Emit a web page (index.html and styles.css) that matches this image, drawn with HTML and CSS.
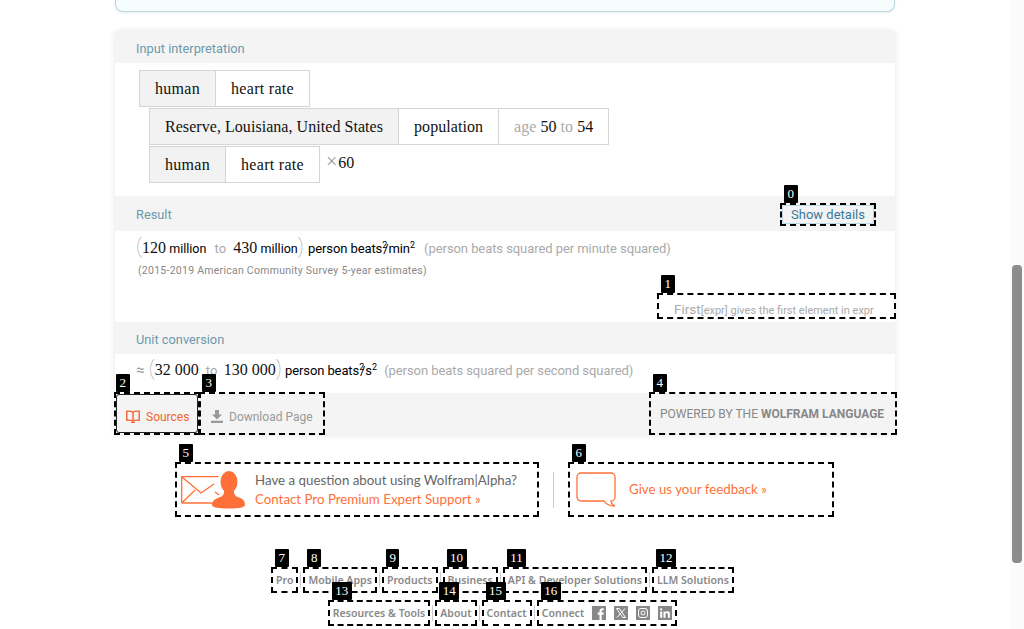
FILE: index.html
```html
<!DOCTYPE html>
<html lang="en">
<head>
    <meta charset="UTF-8">
    <title>human heart rate - Wolfram|Alpha</title>
    <link rel="stylesheet" href="styles.css">
</head>
<body>
<div class="page">
    <main class="main">
        <div class="query-end"></div>

        <section class="card">
            <h2 class="pod-title">Input interpretation</h2>
            <div class="pod-input">
                <div class="chips">
                    <span class="chip chip-head">human</span><span class="chip">heart rate</span>
                </div>
                <div class="chips chips-indent chips-tight">
                    <span class="chip chip-head">Reserve, Louisiana, United States</span><span class="chip">population</span><span class="chip"><i class="dim">age</i> 50 <i class="dim">to</i> 54</span>
                </div>
                <div class="chips chips-indent">
                    <span class="chip chip-head">human</span><span class="chip">heart rate</span>
                    <span class="factor"><i class="times">×</i>60</span>
                </div>
            </div>

            <div class="pod-title pod-title-row">
                <h2 class="pod-name">Result</h2>
                <a class="mark mark-details"><b class="tag">0</b><span class="details-btn">Show details</span></a>
            </div>
            <div class="pod-result">
                <p class="math">
                    <span class="paren">(</span><span class="num">120</span> <span class="mag">million</span>
                    <i class="word-to">to</i>
                    <span class="num">430</span> <span class="mag">million</span><span class="paren">)</span>
                    <span class="unit">person beats<sup>2</sup><span class="slash">/</span>min<sup>2</sup></span>
                    <span class="unit-name">(person beats squared per minute squared)</span>
                </p>
                <p class="source">(2015-2019 American Community Survey 5-year estimates)</p>
                <div class="hint-row">
                    <a class="mark mark-hint"><b class="tag">1</b><span class="hint"><span class="hint-big">First</span>[expr] gives the first element in expr</span></a>
                </div>
            </div>

            <h2 class="pod-title">Unit conversion</h2>
            <div class="pod-unit">
                <p class="math">
                    <i class="approx">≈</i>
                    <span class="paren">(</span><span class="num">32 000</span>
                    <i class="word-to">to</i>
                    <span class="num">130 000</span><span class="paren">)</span>
                    <span class="unit">person beats<sup>2</sup><span class="slash">/</span>s<sup>2</sup></span>
                    <span class="unit-name">(person beats squared per second squared)</span>
                </p>
            </div>

            <div class="card-foot">
                <a class="mark foot-btn foot-sources"><b class="tag">2</b>
                    <svg class="foot-icon" width="14" height="13" viewBox="0 0 14 13"><path d="M7 2.200C5.600 1.200 3.200 1 .8 1.200v9c2.400-.2 4.800 0 6.200 1 1.400-1 3.800-1.200 6.200-1v-9C10.800 1 8.400 1.200 7 2.200zM7 2.200v9" fill="none" stroke="#f0642d" stroke-width="1.400"/><path d="M5 12h4v1H5z" fill="#f0642d"/></svg>
                    Sources
                </a>
                <a class="mark foot-btn foot-download"><b class="tag">3</b>
                    <svg class="foot-icon" width="12" height="13" viewBox="0 0 12 13"><path d="M4 0h4v4.500h3L6 9.500 1 4.500h3zM0 10.800h12V13H0z" fill="#999"/></svg>
                    Download Page
                </a>
                <a class="mark foot-powered"><b class="tag">4</b>POWERED BY THE <strong>WOLFRAM LANGUAGE</strong></a>
            </div>
        </section>

        <div class="promo">
            <a class="mark promo-expert"><b class="tag">5</b>
                <svg class="promo-icon" width="65" height="38" viewBox="0 0 65 38">
                    <path d="M.7 32V5.700H37.500M.7 5.700 20 22l13-9M.7 32l13.500-13M.7 32H31M34 21l4 3" fill="none" stroke="#ff7038" stroke-width="1.300"/>
                    <ellipse cx="48" cy="11" rx="8.500" ry="11" fill="#ff7038"/>
                    <path d="M31 34c0-4 3-6 7-7.500 3-1 5-2 5-6.500h10c0 4.500 2 5.500 5 6.500 4 1.500 6 3.500 6 7.500 0 2.500-6 3.500-16 3.500S31 36.500 31 34z" fill="#ff7038"/>
                </svg>
                <span class="promo-text">
                    <span class="promo-q">Have a question about using Wolfram|Alpha?</span>
                    <span class="promo-link">Contact Pro Premium Expert Support »</span>
                </span>
            </a>
            <span class="promo-sep"></span>
            <a class="mark promo-feedback"><b class="tag">6</b>
                <svg class="promo-icon" width="41" height="35" viewBox="0 0 41 35"><path d="M5 1h30a4 4 0 0 1 4 4v20a4 4 0 0 1-4 4c0 2 2 4 4 5-5 0-9-2-11-5H5a4 4 0 0 1-4-4V5a4 4 0 0 1 4-4z" fill="none" stroke="#ff7038" stroke-width="1.300"/></svg>
                <span class="promo-link feedback-link">Give us your feedback »</span>
            </a>
        </div>

        <nav class="site-foot">
            <div class="foot-row">
                <a class="mark foot-link"><b class="tag">7</b>Pro</a><i class="foot-sep"></i>
                <a class="mark foot-link"><b class="tag">8</b>Mobile Apps</a><i class="foot-sep"></i>
                <a class="mark foot-link"><b class="tag">9</b>Products</a><i class="foot-sep"></i>
                <a class="mark foot-link"><b class="tag">10</b>Business</a><i class="foot-sep"></i>
                <a class="mark foot-link"><b class="tag">11</b>API &amp; Developer Solutions</a><i class="foot-sep"></i>
                <a class="mark foot-link"><b class="tag">12</b>LLM Solutions</a>
            </div>
            <div class="foot-row">
                <a class="mark foot-link"><b class="tag">13</b>Resources &amp; Tools</a><i class="foot-sep"></i>
                <a class="mark foot-link"><b class="tag">14</b>About</a><i class="foot-sep"></i>
                <a class="mark foot-link"><b class="tag">15</b>Contact</a><i class="foot-sep"></i>
                <a class="mark foot-link foot-connect"><b class="tag">16</b>Connect
                    <span class="social">
                        <svg width="14" height="14" viewBox="0 0 14 14"><path d="M0 0h14v14H9.700V8.700h1.800l.3-2.100H9.700V5.300c0-.6.2-1 1-1h1.100V2.400c-.2 0-.8-.1-1.600-.1-1.600 0-2.700 1-2.700 2.800v1.500H5.700v2.100h1.800V14H0z" fill="#888"/></svg>
                        <svg width="14" height="14" viewBox="0 0 14 14"><path d="M0 0h14v14H0z" fill="#888"/><path d="M2.500 2.500h2.800l6.200 9H8.700zM11 2.500 3 11.500" fill="none" stroke="#fff" stroke-width="1"/></svg>
                        <svg width="14" height="14" viewBox="0 0 14 14"><path d="M0 0h14v14H0z" fill="#888"/><rect x="2.500" y="2.500" width="9" height="9" rx="2.500" fill="none" stroke="#fff" stroke-width="1"/><circle cx="7" cy="7" r="2" fill="none" stroke="#fff" stroke-width="1"/><circle cx="10" cy="4" r=".6" fill="#fff"/></svg>
                        <svg width="14" height="14" viewBox="0 0 14 14"><path d="M0 0h14v14H0z" fill="#888"/><path d="M2.200 5.400h2v6.400h-2zM3.200 2.200a1.150 1.150 0 1 1 0 2.300 1.150 1.150 0 0 1 0-2.300zM5.500 5.400h1.900v.9c.3-.6 1-1.100 2-1.100 2 0 2.500 1.300 2.500 3v3.600h-2V8.600c0-.8 0-1.700-1.100-1.700s-1.300.8-1.300 1.700v3.200h-2z" fill="#fff"/></svg>
                    </span>
                </a>
            </div>
        </nav>
    </main>
    <div class="scrollbar"><div class="scroll-thumb"></div></div>
</div>
</body>
</html>
```

FILE: styles.css
```css
* { box-sizing: border-box; }
html, body { margin: 0; height: 629px; overflow: hidden; background: #fff; }
body { font-family: Roboto, sans-serif; }
h2, p { margin: 0; font-weight: normal; }
i { font-style: normal; }

.page { display: flex; height: 629px; }
.main { flex: 1; min-width: 0; }
.scrollbar { width: 14px; height: 629px; background: #fbfbfb; padding: 265px 2px 0; }
.scroll-thumb { width: 10px; height: 298px; background: #8c8c8c; border-radius: 4px; }

.query-end {
    width: 780px;
    height: 12px;
    margin: 0 auto 19px;
    background: #f5fdfd;
    border: 1px solid #b5d8dc;
    border-top: none;
    border-radius: 0 0 8px 8px;
    box-shadow: 0 1px 3px rgba(0, 0, 0, .08);
}

.card {
    width: 780px;
    margin: 0 auto;
    background: #fff;
    border-radius: 4px 4px 0 0;
    box-shadow: 0 0 6px rgba(0, 0, 0, .1);
}
.pod-title {
    height: 32px;
    padding: 10px 21px 0;
    background: #f4f4f4;
    color: #6d99ad;
    font-size: 12.800px;
    line-height: 16px;
}
.pod-title-row {
    display: flex;
    justify-content: space-between;
    height: 35px;
    padding: 7px 19px 0 21px;
}
.pod-name { font-size: 12.800px; line-height: 23px; }

/* annotated boxes */
.mark {
    position: relative;
    display: block;
    border: 2px dashed #000;
}
.tag {
    position: absolute;
    top: -20px;
    left: 2px;
    z-index: 5;
    height: 18px;
    padding: 0 3.500px;
    background: #000;
    color: #fff;
    font: normal 13px/18px "Liberation Serif", serif;
    border-radius: 1px;
}

.pod-input { height: 133px; padding: 7px 0 0 24px; }
.chips { display: flex; align-items: flex-start; height: 37px; margin-bottom: 1px; }
.chips-indent { margin-left: 10px; }
.chip {
    height: 37px;
    padding: 0 15px;
    border: 1px solid #d5d5d5;
    margin-left: -1px;
    font: 16px/35px "Liberation Serif", serif;
    letter-spacing: .3px;
    color: #111;
    white-space: pre;
}
.chips .chip:first-child { margin-left: 0; }
.chips-tight .chip { letter-spacing: .05px; }
.chip-head { background: #f2f2f2; }
.dim { color: #aaa; }
.factor { font: 16px/34px "Liberation Serif", serif; margin-left: 6px; color: #111; }
.times { color: #999; font-size: 20px; line-height: 16px; margin-right: 1px; }

.mark-details { width: 96px; height: 23px; }
.details-btn {
    display: block;
    height: 19px;
    border: 1px solid #bcd9e3;
    border-radius: 2px;
    text-align: center;
    font-size: 13px;
    line-height: 17px;
    color: #3a7a9a;
}

.pod-result { height: 91px; padding: 5px 0 0 21px; }
.math { height: 20px; font-size: 13px; line-height: 20px; white-space: nowrap; color: #000; }
.paren { color: #999; font: 100 20px/20px Roboto, sans-serif; }
.num { font: 16px/20px "Liberation Serif", serif; color: #111; }
.mag { font-size: 12.500px; }
.word-to { color: #aaa; margin: 0 4px 0 5px; }
.pod-unit .word-to { margin: 0 3px 0 4px; }
.unit { letter-spacing: -.1px; }
.pod-result .unit { margin-left: 1px; }
.unit sup { font-size: 9px; line-height: 0; }
.slash { margin-left: -4px; }
.unit-name { color: #aaa; margin-left: 4px; letter-spacing: -.07px; }
.pod-result .unit-name { margin-left: 6px; }
.approx { color: #999; font-size: 15px; margin-right: 1px; }
.source {
    margin: 8px 0 0 2px;
    font-size: 10.500px;
    line-height: 14px;
    color: #888;
    letter-spacing: .26px;
}
.hint-row { display: flex; justify-content: flex-end; margin: 15px -1px 0 0; }
.mark-hint { width: 239px; height: 26px; padding: 4px 0 0 15px; }
.hint { color: #aaa; font-size: 11px; line-height: 14px; white-space: nowrap; }
.hint-big { font-size: 13.500px; }

.pod-unit { height: 39px; padding: 4px 0 0 21px; }

.card-foot {
    display: flex;
    height: 42px;
    background: #f4f4f4;
    font-size: 12px;
}
.foot-btn {
    display: flex;
    align-items: center;
    height: 43px;
    margin-top: -1px;
    padding-top: 6px;
    color: #999;
}
.foot-icon { margin-right: 6px; }
.foot-sources { width: 86px; margin-left: -1px; padding-left: 10px; color: #f0642d; }
.foot-sources .tag { left: 0; }
/* focus ring of the first button, inside its dashes */
.foot-sources::after {
    content: "";
    position: absolute;
    inset: 0;
    border: 1px solid #222;
    border-radius: 3px;
}
.foot-download { width: 126px; margin-left: -1px; padding-left: 10px; }
.foot-download .tag { left: 1px; }
.foot-powered {
    width: 248px;
    height: 43px;
    margin: -1px -2px 0 auto;
    padding-left: 9px;
    line-height: 41px;
    color: #888;
    white-space: nowrap;
}

.promo {
    display: flex;
    align-items: center;
    justify-content: center;
    margin-top: 27px;
    padding-right: 1px;
    font-family: Lato, sans-serif;
    font-size: 13.300px;
}
.promo-expert, .promo-feedback {
    display: flex;
    align-items: center;
    height: 55px;
}
.promo-expert { width: 364px; padding-left: 4px; }
.promo-feedback { width: 266px; padding-left: 6px; }
.promo-icon { margin-right: 9px; flex: none; }
.promo-feedback .promo-icon { margin-right: 12px; }
.promo-text { display: flex; flex-direction: column; gap: 1px; line-height: 18px; }
.promo-q { color: #666; }
.promo-link { color: #ff7038; }
.feedback-link { margin-top: -2px; }
.promo-sep { width: 1px; height: 36px; margin: 0 14px; background: #ccc; }

.site-foot { margin-top: 50px; padding-right: 5px; }
.foot-row {
    display: flex;
    justify-content: center;
    align-items: center;
    margin-bottom: 7px;
    font-family: "Noto Sans", sans-serif;
    font-size: 10.500px;
    font-weight: 600;
    letter-spacing: .04px;
    color: #888;
}
.foot-link { height: 26px; padding: 0 3px; line-height: 22px; white-space: nowrap; }
.foot-sep { width: 1px; height: 16px; margin: 0 2px; background: #ccc; }
.foot-connect { display: flex; align-items: center; }
.social { display: flex; gap: 8px; margin-left: 8px; }
```
